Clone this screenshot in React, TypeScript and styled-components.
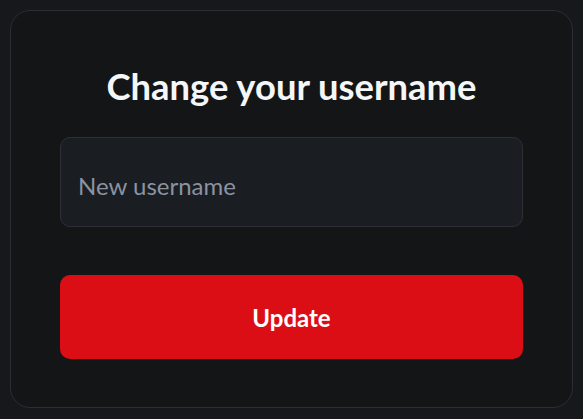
import React from "react";
import styled, { createGlobalStyle } from "styled-components";

const Global = createGlobalStyle`
  html, body { margin: 0; padding: 0; background: #17181b; }
  body { font-family: Lato, "Noto Sans", sans-serif; }
  * { box-sizing: border-box; }
`;

const Page = styled.div`
  padding: 10px;
  width: 583px;
  height: 419px;
`;

const Card = styled.form`
  width: 563px;
  height: 398px;
  background: #141517;
  border: 1px solid #2c2e33;
  border-radius: 20px;
  padding: 50px 49px 0;
  display: flex;
  flex-direction: column;
  align-items: stretch;
`;

const Title = styled.h1`
  margin: 0;
  font-size: 36.4px;
  font-weight: 700;
  line-height: 43px;
  color: #f5f6f8;
  text-align: center;
  padding-top: 4px;
`;

const Input = styled.input`
  margin-top: 29px;
  height: 90px;
  width: 100%;
  background: #1a1d21;
  border: 1px solid #2c2f35;
  border-radius: 10px;
  padding: 6px 17px 0;
  font-family: Lato, "Noto Sans", sans-serif;
  font-size: 24px;
  color: #e5e7eb;
  outline: none;
  &::placeholder { color: #8a93a1; }
`;

const Button = styled.button`
  margin-top: 48px;
  height: 84px;
  width: 100%;
  background: #dc0e15;
  border: none;
  border-radius: 10px;
  color: #ffffff;
  font-family: Lato, "Noto Sans", sans-serif;
  font-size: 24px;
  font-weight: 700;
  cursor: pointer;
`;

export default function App() {
  return (
    <>
      <Global />
      <Page>
        <Card onSubmit={(e) => e.preventDefault()}>
          <Title>Change your username</Title>
          <Input placeholder="New username" />
          <Button type="submit">Update</Button>
        </Card>
      </Page>
    </>
  );
}
